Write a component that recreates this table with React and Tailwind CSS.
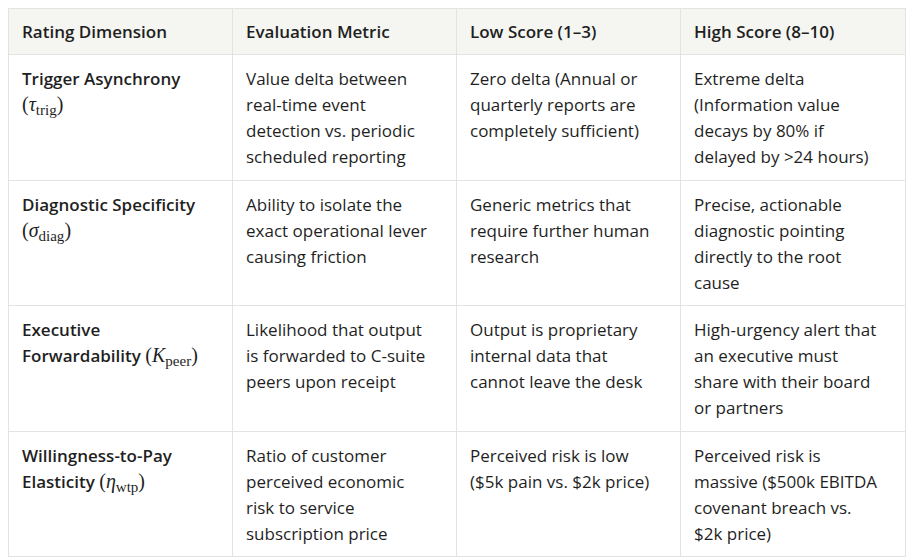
import React from "react";

const sans = "font-['Open_Sans',sans-serif]";

function M({ base, sub }) {
  // KaTeX-like inline math: italic greek with roman subscript
  return (
    <span className="font-['Liberation_Serif',serif] font-normal text-[20px] leading-none whitespace-nowrap">
      (<i>{base}</i>
      <span className="text-[15px] leading-none relative top-[4px]">{sub}</span>)
    </span>
  );
}

const rows = [
  {
    dim: (
      <>
        Trigger Asynchrony
        <br />
        <M base="τ" sub="trig" />
      </>
    ),
    metric: ["Value delta between", "real-time event", "detection vs. periodic", "scheduled reporting"],
    low: ["Zero delta (Annual or", "quarterly reports are", "completely sufficient)"],
    high: ["Extreme delta", "(Information value", "decays by 80% if", "delayed by >24 hours)"],
  },
  {
    dim: (
      <>
        Diagnostic Specificity
        <br />
        <M base="σ" sub="diag" />
      </>
    ),
    metric: ["Ability to isolate the", "exact operational lever", "causing friction"],
    low: ["Generic metrics that", "require further human", "research"],
    high: ["Precise, actionable", "diagnostic pointing", "directly to the root", "cause"],
  },
  {
    dim: (
      <>
        Executive
        <br />
        Forwardability <M base="K" sub="peer" />
      </>
    ),
    metric: ["Likelihood that output", "is forwarded to C-suite", "peers upon receipt"],
    low: ["Output is proprietary", "internal data that", "cannot leave the desk"],
    high: ["High-urgency alert that", "an executive must", "share with their board", "or partners"],
  },
  {
    dim: (
      <>
        Willingness-to-Pay
        <br />
        Elasticity <M base="η" sub="wtp" />
      </>
    ),
    metric: ["Ratio of customer", "perceived economic", "risk to service", "subscription price"],
    low: ["Perceived risk is low", "($5k pain vs. $2k price)"],
    high: ["Perceived risk is", "massive ($500k EBITDA", "covenant breach vs.", "$2k price)"],
  },
];

function Lines({ items }) {
  return items.map((t, i) => (
    <span key={i} className="block">
      {t}
    </span>
  ));
}

const cell = "border border-[#e3e3e3] px-[13px] pt-[11px] pb-[9.5px] align-top";

export default function App() {
  return (
    <div className={`bg-white w-[908px] h-[559px] pt-[8px] pl-[8px] ${sans}`}>
      <table className="border-collapse w-[897px] table-fixed text-[17px] leading-[26px] text-[#1f1f1f]">
        <colgroup>
          <col className="w-[224px]" />
          <col className="w-[224px]" />
          <col className="w-[224px]" />
          <col className="w-[225px]" />
        </colgroup>
        <thead>
          <tr className="bg-[#f5f5f1]">
            {["Rating Dimension", "Evaluation Metric", "Low Score (1–3)", "High Score (8–10)"].map((h) => (
              <th
                key={h}
                className="border border-[#e3e3e3] text-left font-semibold px-[13px] pt-[10px] pb-[9px] align-top"
              >
                {h}
              </th>
            ))}
          </tr>
        </thead>
        <tbody>
          {rows.map((r, i) => (
            <tr key={i}>
              <td className={`${cell} font-semibold`}>{r.dim}</td>
              <td className={cell}>
                <Lines items={r.metric} />
              </td>
              <td className={cell}>
                <Lines items={r.low} />
              </td>
              <td className={cell}>
                <Lines items={r.high} />
              </td>
            </tr>
          ))}
        </tbody>
      </table>
    </div>
  );
}
